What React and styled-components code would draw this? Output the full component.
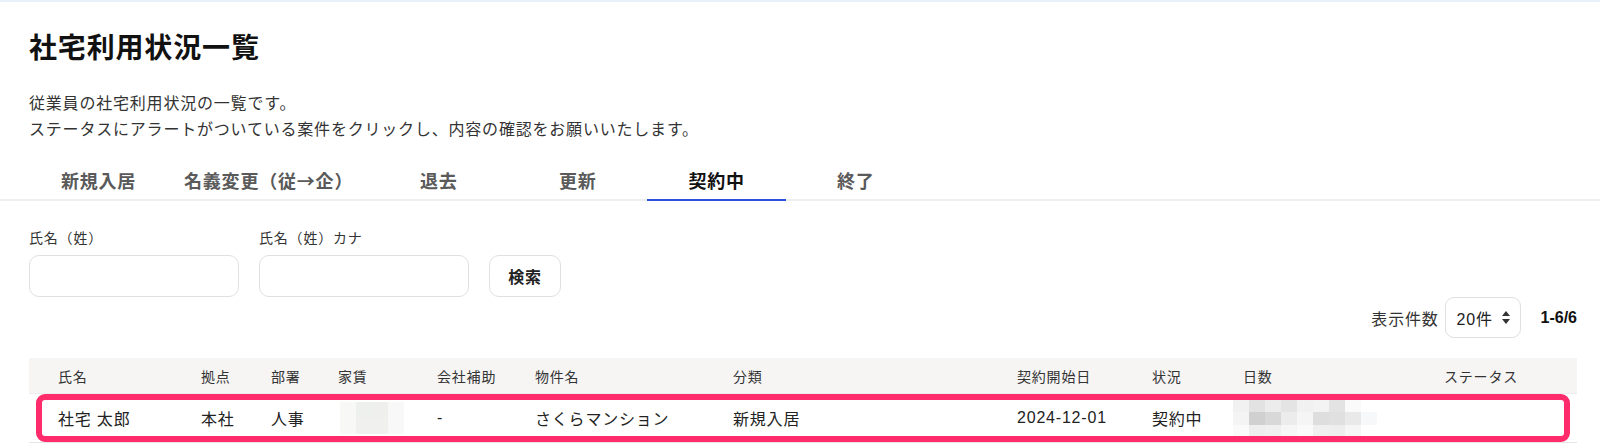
import React from "react";
import styled, { createGlobalStyle } from "styled-components";

const GlobalStyle = createGlobalStyle`
  html, body {
    margin: 0;
    padding: 0;
    background: #fff;
  }
  body {
    font-family: "Liberation Sans", "Noto Sans CJK JP", sans-serif;
    color: #333;
    letter-spacing: 0.05em;
  }
`;

const TopBar = styled.div`
  height: 2px;
  background: #e8f0fa;
`;

const Page = styled.div`
  padding: 27px 23px 0 29px;
`;

const Title = styled.h1`
  margin: 0;
  font-size: 28px;
  line-height: 40px;
  font-weight: 700;
  letter-spacing: 0.03em;
  color: #111;
`;

const Lead = styled.p`
  margin: 22px 0 0;
  font-size: 16px;
  line-height: 26px;
  color: #333;
`;

const TabBar = styled.div`
  display: flex;
  margin: 20px -23px 0 -29px;
  padding-left: 29px;
  border-bottom: 2px solid #eeeeee;
`;

const Tab = styled.div`
  box-sizing: border-box;
  min-width: 139px;
  height: 38px;
  padding: 0 16px 2px;
  margin-bottom: -2px;
  display: flex;
  align-items: center;
  justify-content: center;
  font-family: "Noto Sans CJK JP", sans-serif;
  font-size: 18px;
  font-weight: 700;
  white-space: nowrap;
  color: ${(p) => (p.$active ? "#111" : "#5a5a5a")};
  border-bottom: 2px solid ${(p) => (p.$active ? "#2b4fe0" : "transparent")};
`;

const SearchRow = styled.div`
  display: flex;
  align-items: flex-end;
  gap: 20px;
  margin-top: 27px;
`;

const Field = styled.label`
  display: flex;
  flex-direction: column;
  gap: 7px;
  font-size: 14px;
  line-height: 20px;
  color: #333;
`;

const TextInput = styled.input`
  box-sizing: border-box;
  width: 210px;
  height: 42px;
  border: 1px solid #e0e0e0;
  border-radius: 10px;
  background: #fff;
  outline: none;
`;

const Button = styled.button`
  box-sizing: border-box;
  width: 72px;
  height: 42px;
  border: 1px solid #e0e0e0;
  border-radius: 10px;
  background: #fff;
  font-family: inherit;
  font-size: 16px;
  font-weight: 700;
  letter-spacing: 0.05em;
  color: #222;
`;

const CountRow = styled.div`
  display: flex;
  justify-content: flex-end;
  align-items: center;
  font-size: 16px;
  color: #333;
`;

const Select = styled.div`
  box-sizing: border-box;
  width: 76px;
  height: 41px;
  margin: 0 20px 0 6px;
  padding: 0 10px 0 11px;
  display: flex;
  align-items: center;
  justify-content: space-between;
  border: 1px solid #e0e0e0;
  border-radius: 9px;
  color: #222;
`;

const Range = styled.span`
  font-weight: 700;
  color: #111;
  letter-spacing: 0;
`;

const Table = styled.div`
  margin-top: 20px;
`;

const cols = "143px 70px 67px 99px 98px 198px 284px 135px 91px 201px 1fr";

const HeadRow = styled.div`
  display: grid;
  grid-template-columns: ${cols};
  align-items: center;
  height: 35px;
  padding-left: 29px;
  background: #f6f5f4;
  border-bottom: 1px solid #ececec;
  font-size: 14px;
  color: #333;
`;

const BodyRow = styled.div`
  position: relative;
  display: grid;
  grid-template-columns: ${cols};
  align-items: center;
  height: 48px;
  padding-left: 29px;
  border-bottom: 1px solid #e6e6e6;
  font-size: 16px;
  color: #222;

  &::after {
    content: "";
    position: absolute;
    top: 0;
    bottom: 0;
    left: 7px;
    right: 7px;
    border: 6px solid #ff2b6b;
    border-radius: 9px;
    pointer-events: none;
  }
`;

const Cell = styled.div`
  white-space: nowrap;
  margin-left: ${(p) => p.$shift || 0}px;
`;

const Mosaic = ({ rows, w, h }) => (
  <svg width={rows[0].length * w} height={rows.length * h} style={{ display: "block" }}>
    {rows.map((row, y) =>
      row.map((c, x) => <rect key={`${x}-${y}`} x={x * w} y={y * h} width={w} height={h} fill={c} />)
    )}
  </svg>
);

const rentBlur = [
  ["#f8f8f6", "#eef0ee", "#eff0ee", "#f8f8f8"],
  ["#f8f8f6", "#f0f0ee", "#f0f0ee", "#f8f8f8"],
];

const daysBlur = [
  ["#f1f1f1", "#e2e2e2", "#ececec", "#e4e4e4", "#f1f1f1", "#f3f3f3", "#e3e3e3", "#fafafa", "#ffffff"],
  ["#f4f4f4", "#d0d0d0", "#d8d8d8", "#ececec", "#f5f5f5", "#dedede", "#e0e0e0", "#e9e9e9", "#f6f8fa"],
  ["#fafafa", "#eeeeee", "#f0f0f0", "#f6f6f6", "#fafafa", "#f0f0f0", "#eeeeee", "#f6f6f6", "#ffffff"],
];

const headers = ["氏名", "拠点", "部署", "家賃", "会社補助", "物件名", "分類", "契約開始日", "状況", "日数", "ステータス"];

const tabs = ["新規入居", "名義変更（従→企）", "退去", "更新", "契約中", "終了"];

const SortArrows = () => (
  <svg width="8" height="13" viewBox="0 0 8 13">
    <path d="M4 0 L8 5 H0 Z" fill="#333" />
    <path d="M4 13 L8 8 H0 Z" fill="#333" />
  </svg>
);

const App = () => (
  <>
    <GlobalStyle />
    <TopBar />
    <Page>
      <Title>社宅利用状況一覧</Title>
      <Lead>
        従業員の社宅利用状況の一覧です。
        <br />
        ステータスにアラートがついている案件をクリックし、内容の確認をお願いいたします。
      </Lead>
      <TabBar>
        {tabs.map((t) => (
          <Tab key={t} $active={t === "契約中"}>
            {t}
          </Tab>
        ))}
      </TabBar>
      <SearchRow>
        <Field>
          氏名（姓）
          <TextInput />
        </Field>
        <Field>
          氏名（姓）カナ
          <TextInput />
        </Field>
        <Button>検索</Button>
      </SearchRow>
      <CountRow>
        表示件数
        <Select>
          20件
          <SortArrows />
        </Select>
        <Range>1-6/6</Range>
      </CountRow>
      <Table>
        <HeadRow>
          {headers.map((h) => (
            <Cell key={h}>{h}</Cell>
          ))}
        </HeadRow>
        <BodyRow>
          <Cell>社宅 太郎</Cell>
          <Cell>本社</Cell>
          <Cell>人事</Cell>
          <Cell $shift={2}>
            <Mosaic rows={rentBlur} w={16} h={16} />
          </Cell>
          <Cell>-</Cell>
          <Cell>さくらマンション</Cell>
          <Cell>新規入居</Cell>
          <Cell>2024-12-01</Cell>
          <Cell>契約中</Cell>
          <Cell $shift={-10}>
            <Mosaic rows={daysBlur} w={16} h={13} />
          </Cell>
          <Cell />
        </BodyRow>
      </Table>
    </Page>
  </>
);

export default App;
